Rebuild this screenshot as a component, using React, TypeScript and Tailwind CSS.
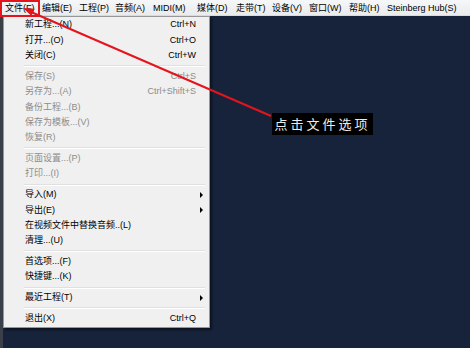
import React from "react";

type Item = { label: string; shortcut?: string; disabled?: boolean; sub?: boolean } | "sep";

const bar = [
  { t: "文件(F)", w: "w-[37px]" },
  { t: "编辑(E)", w: "w-[37px]" },
  { t: "工程(P)", w: "w-[36px]" },
  { t: "音频(A)", w: "w-[38px]" },
  { t: "MIDI(M)", w: "w-[44px]" },
  { t: "媒体(D)", w: "w-[39px]" },
  { t: "走带(T)", w: "w-[36px]" },
  { t: "设备(V)", w: "w-[37px]" },
  { t: "窗口(W)", w: "w-[40px]" },
  { t: "帮助(H)", w: "w-[38px]" },
  { t: "Steinberg Hub(S)", w: "w-[76px]" },
];

const items: Item[] = [
  { label: "新工程...(N)", shortcut: "Ctrl+N" },
  { label: "打开...(O)", shortcut: "Ctrl+O" },
  { label: "关闭(C)", shortcut: "Ctrl+W" },
  "sep",
  { label: "保存(S)", shortcut: "Ctrl+S", disabled: true },
  { label: "另存为...(A)", shortcut: "Ctrl+Shift+S", disabled: true },
  { label: "备份工程...(B)", disabled: true },
  { label: "保存为模板...(V)", disabled: true },
  { label: "恢复(R)", disabled: true },
  "sep",
  { label: "页面设置...(P)", disabled: true },
  { label: "打印...(I)", disabled: true },
  "sep",
  { label: "导入(M)", sub: true },
  { label: "导出(E)", sub: true },
  { label: "在视频文件中替换音频..(L)" },
  { label: "清理...(U)" },
  "sep",
  { label: "首选项...(F)" },
  { label: "快捷键...(K)" },
  "sep",
  { label: "最近工程(T)", sub: true },
  "sep",
  { label: "退出(X)", shortcut: "Ctrl+Q" },
];

export default function App() {
  return (
    <div className="relative w-[470px] h-[348px] overflow-hidden flex flex-col font-['Liberation_Sans','Noto_Sans_CJK_SC',sans-serif] text-[9px]">
      {/* menu bar */}
      <div className="h-[16px] flex items-center pl-[5px] bg-gradient-to-b from-[#f6f7f8] to-[#eaebec] border-b border-[#dadada] text-black">
        {bar.map((b) => (
          <div key={b.t} className={`${b.w} whitespace-nowrap leading-[16px]`}>
            {b.t}
          </div>
        ))}
      </div>

      <div className="flex flex-1">
        <div className="w-[3px] bg-[#3b4048]" />
        <div className="relative flex-1 bg-[#16233a]">
          {/* dropdown */}
          <div className="absolute left-0 top-0 w-[207px] bg-[#f0f0f0] border border-[#979797] shadow-[2px_2px_2px_rgba(0,0,0,0.45)] py-[0.5px]">
            {items.map((it, i) =>
              it === "sep" ? (
                <div key={i} className="h-[5.5px] flex flex-col justify-center pl-[20px] pr-[4px]">
                  <div className="h-px bg-[#e0e0e0]" />
                  <div className="h-px bg-white" />
                </div>
              ) : (
                <div
                  key={i}
                  className={`h-[15.33px] flex items-center pl-[21px] pr-[13px] whitespace-nowrap ${
                    it.disabled ? "text-[#8c8c8c]" : "text-black"
                  }`}
                >
                  <span className="flex-1">{it.label}</span>
                  {it.shortcut && <span>{it.shortcut}</span>}
                  {it.sub && (
                    <span className="w-0 h-0 mr-[-7px] border-y-[3px] border-y-transparent border-l-[3px] border-l-black" />
                  )}
                </div>
              )
            )}
          </div>
        </div>
      </div>

      {/* annotation */}
      <div className="absolute left-0 top-0 w-[40px] h-[17px] border-2 border-[#e3141c]" />
      <svg className="absolute left-0 top-0" width="470" height="348">
        <line x1="271" y1="116" x2="31" y2="12" stroke="#e3141c" strokeWidth="2" />
        <polygon points="23,8 31.5,16.1 34.7,8.7" fill="#e3141c" />
      </svg>
      <div className="absolute left-[272px] top-[113px] w-[101px] h-[22px] bg-black text-[#ececec] text-[13px] tracking-[3px] flex items-center justify-center font-['Noto_Sans_CJK_SC',sans-serif]">
        点击文件选项
      </div>
    </div>
  );
}
